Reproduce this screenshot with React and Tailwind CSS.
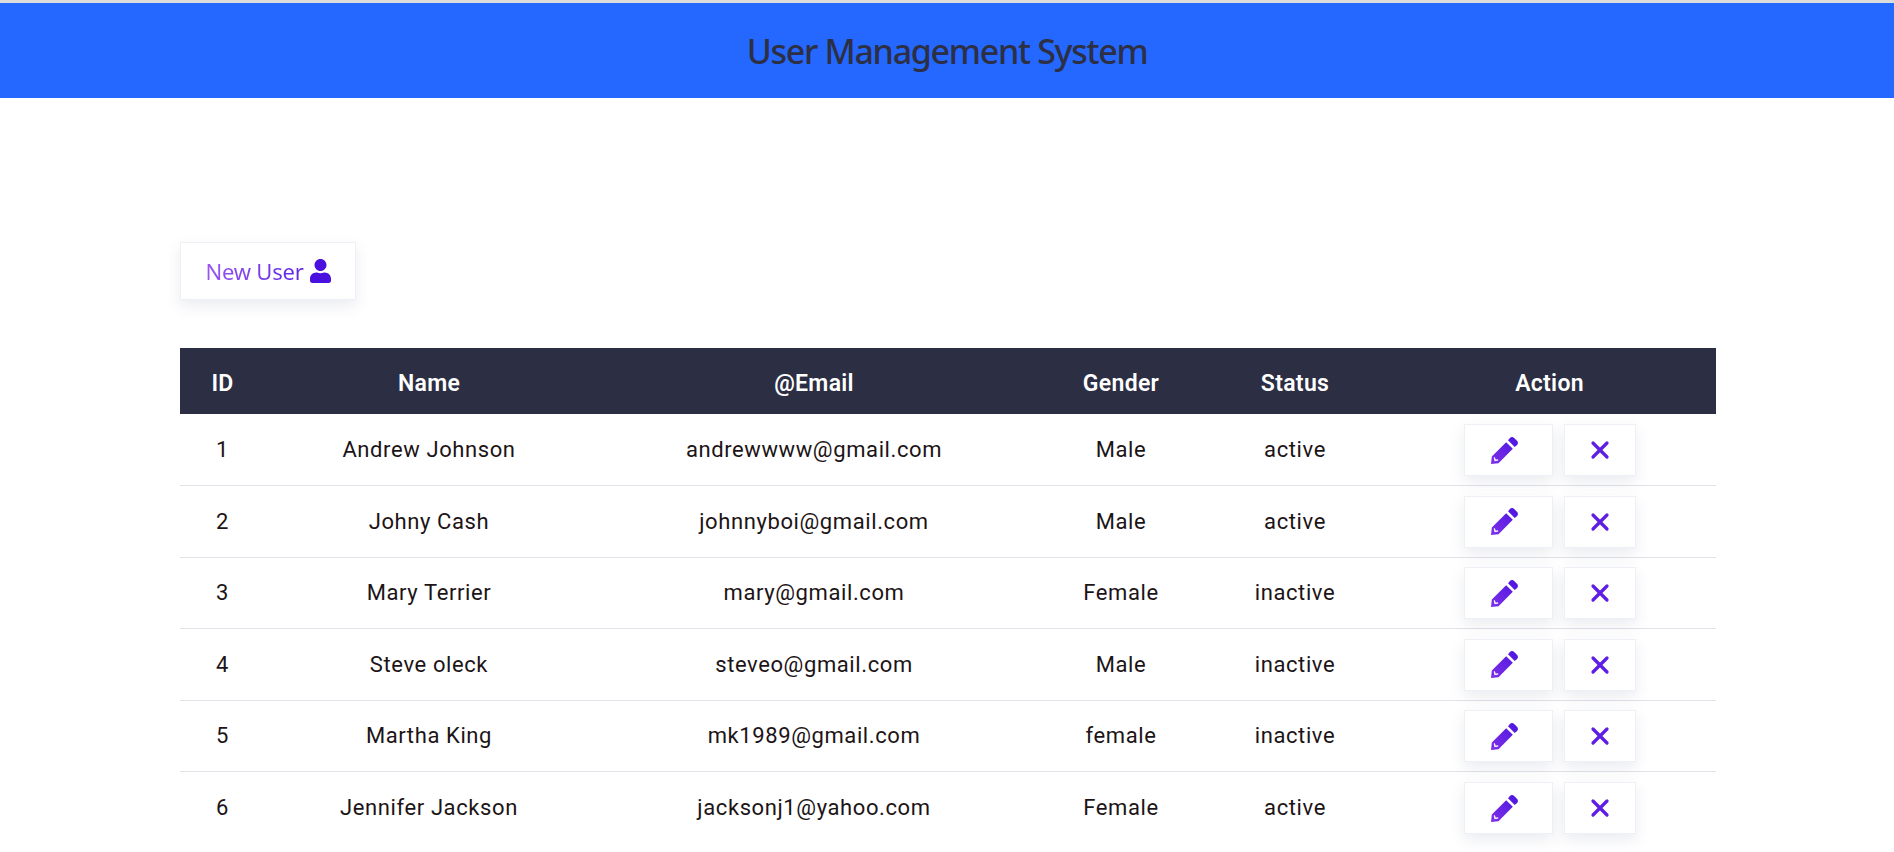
import { X } from 'lucide-react'
import { FaUser } from 'react-icons/fa'

const USERS = [
  { id: 1, name: 'Andrew Johnson', email: 'andrewwww@gmail.com', gender: 'Male', status: 'active' },
  { id: 2, name: 'Johny Cash', email: 'johnnyboi@gmail.com', gender: 'Male', status: 'active' },
  { id: 3, name: 'Mary Terrier', email: 'mary@gmail.com', gender: 'Female', status: 'inactive' },
  { id: 4, name: 'Steve oleck', email: 'steveo@gmail.com', gender: 'Male', status: 'inactive' },
  { id: 5, name: 'Martha King', email: 'mk1989@gmail.com', gender: 'female', status: 'inactive' },
  { id: 6, name: 'Jennifer Jackson', email: 'jacksonj1@yahoo.com', gender: 'Female', status: 'active' },
]

const ACTION_BTN = 'flex h-[52px] items-center justify-center border border-[#eef0f5] bg-white shadow-[0_6px_14px_rgba(60,70,110,0.1)]'

function PencilIcon({ id }) {
  return (
    <svg className="h-[27px] w-[27px]" viewBox="0 0 26 26">
      <defs>
        <linearGradient id={id} x1="1" y1="0" x2="0" y2="1">
          <stop offset="0" stopColor="#4a14e0" />
          <stop offset="1" stopColor="#8030e8" />
        </linearGradient>
      </defs>
      <path
        fill={`url(#${id})`}
        d="M0.8 18.8 14.6 5 21 11.4 7.2 25.2 0 26z M16.4 3.2 18 1.2c1.2-1.4 3-1.5 4.3-.3l2.7 2.7c1.3 1.3 1.2 3-.1 4.3l-2.1 1.8z"
      />
      <path fill="none" stroke="#fff" strokeWidth="1.3" d="M3.2 19.6 3.9 22.6 6.9 22" />
    </svg>
  )
}

function UserRow({ user }) {
  return (
    <tr className="h-[71.5px] border-b border-[#e2e2e8] last:border-b-0">
      <td>{user.id}</td>
      <td>{user.name}</td>
      <td>{user.email}</td>
      <td>{user.gender}</td>
      <td>{user.status}</td>
      <td>
        <div className="flex justify-center gap-[11px] pt-[1px]">
          <button className={`${ACTION_BTN} w-[89px] pr-[7px]`}><PencilIcon id={`pencil-${user.id}`} /></button>
          <button className={`${ACTION_BTN} w-[72px] text-[#5f1ee6]`}><X size={28} strokeWidth={2.8} /></button>
        </div>
      </td>
    </tr>
  )
}

export default function App() {
  return (
    <div className="min-h-[852px] overflow-hidden bg-white font-['Roboto',sans-serif]">
      <div className="h-[3px] bg-[#dcdcdc]" />
      <header className="flex h-[95px] items-center justify-center bg-[#2468ff]">
        <h1 className="pt-[2px] font-['Noto_Sans',sans-serif] text-[34px] font-medium tracking-[-1.3px] text-[#2d2f44]">User Management System</h1>
      </header>
      <main className="px-[180px] pt-[144px]">
        <button className="flex h-[58px] w-[176px] items-center justify-center gap-[6px] border border-[#eef0f5] bg-white font-['Noto_Sans',sans-serif] text-[22px] tracking-[-0.2px] shadow-[0_6px_14px_rgba(60,70,110,0.1)]">
          <span className="bg-gradient-to-r from-[#9a55f0] to-[#5f22e6] bg-clip-text text-transparent">New User</span>
          <FaUser className="h-[24px] w-[21px] text-[#4a10e0]" />
        </button>
        <table className="mt-[48px] w-[1536px] table-fixed text-center text-[22px] tracking-[0.6px] text-[#1c1416]">
          <colgroup>
            <col className="w-[85px]" />
            <col className="w-[328px]" />
            <col className="w-[442px]" />
            <col className="w-[172px]" />
            <col className="w-[176px]" />
            <col className="w-[333px]" />
          </colgroup>
          <thead className="bg-[#2c2e43] text-[23px] text-white">
            <tr className="h-[66px]">
              <th className="pt-[6px] font-semibold tracking-[0.3px]">ID</th>
              <th className="pt-[6px] font-semibold tracking-[0.3px]">Name</th>
              <th className="pt-[6px] font-semibold tracking-[0.3px]">@Email</th>
              <th className="pt-[6px] font-semibold tracking-[0.3px]">Gender</th>
              <th className="pt-[6px] font-semibold tracking-[0.3px]">Status</th>
              <th className="pt-[6px] font-semibold tracking-[0.3px]">Action</th>
            </tr>
          </thead>
          <tbody>
            {USERS.map((u) => <UserRow key={u.id} user={u} />)}
          </tbody>
        </table>
      </main>
    </div>
  )
}
